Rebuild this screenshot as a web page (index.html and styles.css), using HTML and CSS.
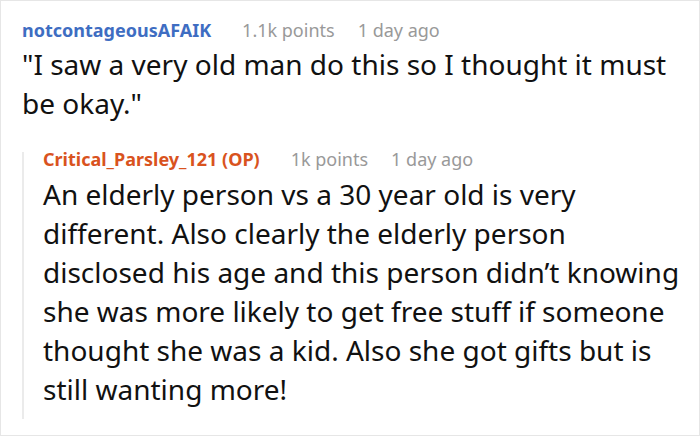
FILE: index.html
```html
<!DOCTYPE html>
<html>
<head>
<meta charset="utf-8">
<link rel="stylesheet" href="styles.css">
</head>
<body>
<div class="card">
  <div class="comment">
    <div class="meta">
      <span class="user">notcontageousAFAIK</span>
      <span class="points">1.1k points</span>
      <span class="time">1 day ago</span>
    </div>
    <p class="text">"I saw a very old man do this so I thought it must be okay."</p>
  </div>
  <div class="reply">
    <div class="meta">
      <span class="user op">Critical_Parsley_121 (OP)</span>
      <span class="points">1k points</span>
      <span class="time">1 day ago</span>
    </div>
    <p class="text">An elderly person vs a 30 year old is very different. Also clearly the elderly person disclosed his age and this person didn’t knowing she was more likely to get free stuff if someone thought she was a kid. Also she got gifts but is still wanting more!</p>
  </div>
</div>
</body>
</html>
```

FILE: styles.css
```css
html, body {
  margin: 0;
  padding: 0;
  background: #fff;
}
.card {
  box-sizing: border-box;
  width: 700px;
  height: 436px;
  border: 1px solid #e6e6e6;
  padding: 16px 8px 0 21px;
  font-family: "Noto Sans", "Open Sans", sans-serif;
  color: #111;
  overflow: hidden;
}
.meta {
  display: flex;
  align-items: baseline;
  font-size: 18px;
  line-height: 26px;
}
.user {
  font-weight: bold;
  color: #3e6dc2;
}
.user.op {
  color: #d9531e;
}
.points {
  color: #999;
  margin-left: 31px;
}
.time {
  color: #999;
  margin-left: 23px;
}
.text {
  margin: 0;
  font-size: 28px;
  line-height: 39px;
}
.comment .text {
  margin-top: 2px;
}
.reply {
  margin-top: 29px;
  border-left: 2px solid #ebebeb;
  padding: 0 0 10px 19px;
}
.reply .meta {
  line-height: 14px;
}
.reply .text {
  margin-top: 9px;
}
```
